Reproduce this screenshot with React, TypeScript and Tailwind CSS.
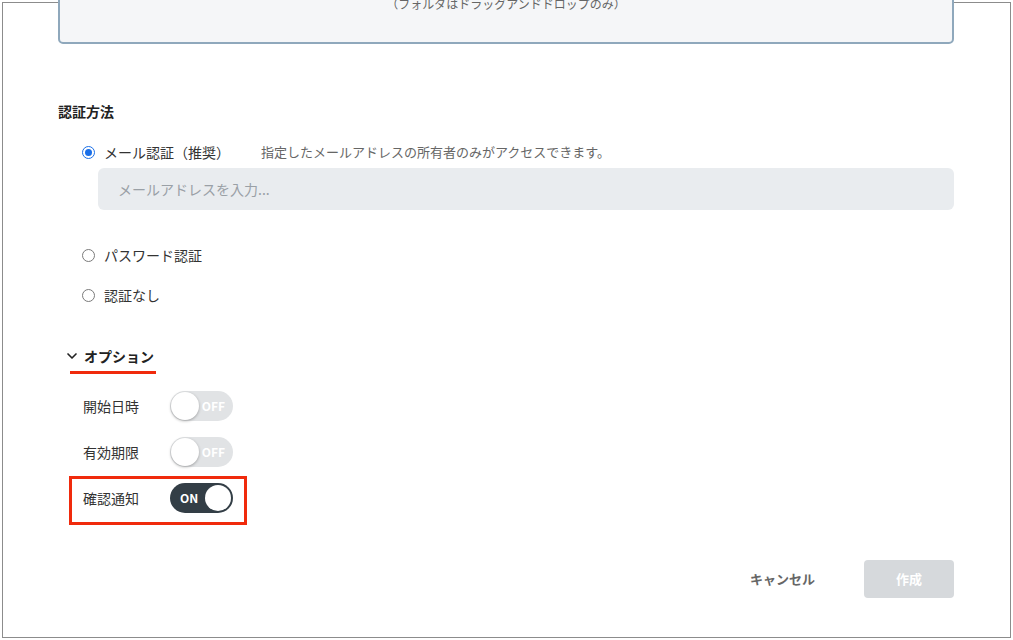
import { ChevronDown } from "lucide-react";

function Radio({ checked }: { checked?: boolean }) {
  if (checked) {
    return (
      <span className="flex h-[13px] w-[13px] shrink-0 items-center justify-center rounded-full border-[1.5px] border-[#1a6fe8] bg-white">
        <span className="h-[7px] w-[7px] rounded-full bg-[#1a6fe8]" />
      </span>
    );
  }
  return <span className="h-[13px] w-[13px] shrink-0 rounded-full border border-[#7a7a7a] bg-white" />;
}

function Toggle({ on }: { on?: boolean }) {
  if (on) {
    return (
      <div className="relative h-[30px] w-[63px] rounded-full bg-[#333e46]">
        <span className="absolute left-[10px] top-0 text-[12px] font-bold leading-[30px] text-white">ON</span>
        <span className="absolute right-[2px] top-[2px] h-[26px] w-[26px] rounded-full bg-white" />
      </div>
    );
  }
  return (
    <div className="relative h-[30px] w-[63px] rounded-full bg-[#e1e3e5]">
      <span className="absolute right-[8px] top-0 text-[12px] font-semibold leading-[30px] text-white">OFF</span>
      <span className="absolute left-[1px] top-[1px] h-[28px] w-[28px] rounded-full bg-white shadow-[0_1px_3px_rgba(0,0,0,0.3)]" />
    </div>
  );
}

export default function App() {
  return (
    <div className="h-[640px] w-[1013px] overflow-hidden bg-white p-[2px] font-['Noto_Sans_CJK_JP','Noto_Sans',sans-serif] text-[#333]">
      <div className="flex h-[636px] w-[1009px] flex-col border border-[#8c8c8c] pl-[55px] pr-[56px]">
        <div className="-mt-[60px] flex h-[101px] flex-col items-center justify-end rounded-[5px] border-2 border-[#8fa8bc] bg-[#f5f6f8] pb-[30px]">
          <p className="text-[12px] leading-4 text-[#666]">（フォルダはドラッグアンドドロップのみ）</p>
        </div>

        <h2 className="mt-[57px] text-[14px] font-bold leading-5 text-[#222]">認証方法</h2>

        <label className="mt-[21px] flex items-center pl-[24px] leading-5">
          <Radio checked />
          <span className="ml-[9px] text-[14px]">メール認証（推奨）</span>
          <span className="ml-[31px] text-[13px] text-[#666]">指定したメールアドレスの所有者のみがアクセスできます。</span>
        </label>
        <div className="ml-[40px] mt-[6px] flex h-[42px] items-center rounded-[6px] bg-[#e9ecef] px-[20px] text-[14px] text-[#9aa0a6]">
          メールアドレスを入力...
        </div>

        <label className="mt-[35px] flex items-center pl-[24px] leading-5">
          <Radio />
          <span className="ml-[9px] text-[14px]">パスワード認証</span>
        </label>
        <label className="mt-[20px] flex items-center pl-[24px] leading-5">
          <Radio />
          <span className="ml-[9px] text-[14px]">認証なし</span>
        </label>

        <div className="mt-[41px] flex flex-col">
          <div className="flex items-center pl-[6px] leading-5">
            <ChevronDown size={16} strokeWidth={2.5} className="text-[#222]" />
            <span className="ml-[4px] text-[14px] font-bold text-[#222]">オプション</span>
          </div>
          <div className="ml-[12px] mt-[5px] h-[3px] w-[86px] bg-[#f02a0c]" />
        </div>

        <div className="mt-[17px] flex items-center pl-[25px]">
          <span className="w-[87px] text-[14px]">開始日時</span>
          <Toggle />
        </div>
        <div className="mt-[16px] flex items-center pl-[25px]">
          <span className="w-[87px] text-[14px]">有効期限</span>
          <Toggle />
        </div>
        <div className="ml-[11px] mt-[9px] flex w-[178px] items-center border-[3px] border-[#f02a0c] pb-[9px] pl-[11px] pt-[4px]">
          <span className="w-[87px] text-[14px]">確認通知</span>
          <Toggle on />
        </div>

        <div className="mt-[35px] flex items-center justify-end gap-[49px]">
          <button type="button" className="text-[13px] font-bold text-[#666]">キャンセル</button>
          <button type="button" className="h-[38px] w-[90px] rounded-[4px] bg-[#d6d9dc] text-[13px] font-bold text-white">作成</button>
        </div>
      </div>
    </div>
  );
}
